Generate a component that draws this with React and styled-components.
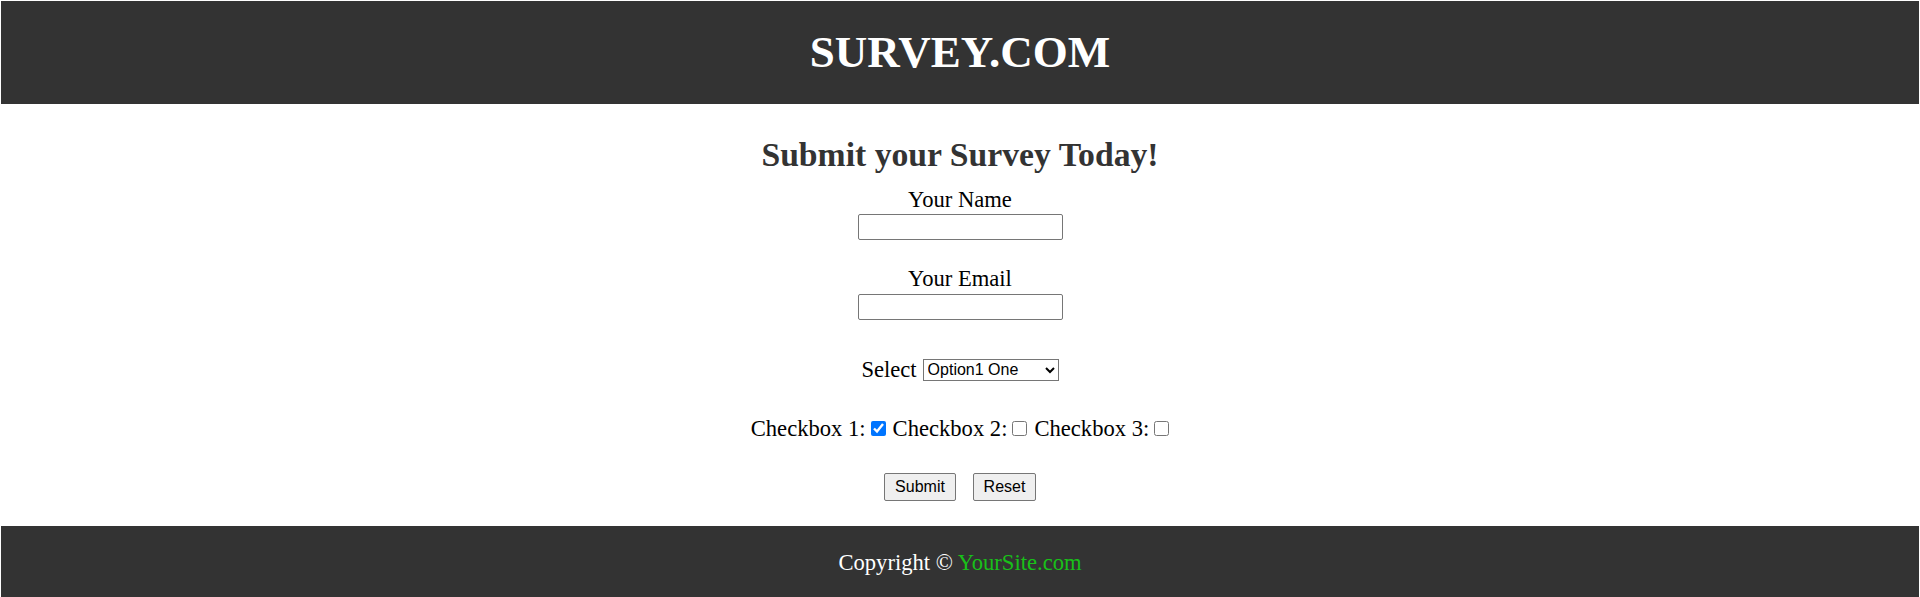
import styled, { createGlobalStyle } from "styled-components";

const GlobalStyle = createGlobalStyle`
  body {
    margin: 1px;
    background: #fff;
    font-family: "Liberation Serif", "Times New Roman", serif;
  }
`;

const Header = styled.header`
  height: 103px;
  background: #333;
  display: flex;
  align-items: center;
  justify-content: center;
`;

const Logo = styled.h1`
  margin: 0;
  color: #fff;
  font-size: 45px;
  font-weight: 700;
  line-height: 1;
`;

const Form = styled.form`
  display: flex;
  flex-direction: column;
  align-items: center;
  padding-top: 31px;
  padding-bottom: 25px;
`;

const Title = styled.h2`
  margin: 0 0 13px;
  color: #333;
  font-size: 33.7px;
  line-height: 39px;
  font-weight: 700;
`;

const Label = styled.label`
  display: block;
  font-size: 22.6px;
  line-height: 25px;
  color: #000;
  margin-top: ${({ $mt }) => $mt || "0"};
`;

const TextInput = styled.input`
  box-sizing: border-box;
  width: 205px;
  height: 26px;
  margin: ${({ $margin }) => $margin || "2px 0 0"};
  border: 1px solid #767676;
  border-radius: 2px;
  padding: 1px 3px;
  font-family: "Liberation Sans", Arial, sans-serif;
  font-size: 15px;
`;

const Row = styled.div`
  display: flex;
  align-items: center;
  height: 25px;
  font-size: 22.6px;
  line-height: 25px;
  margin-top: ${({ $mt }) => $mt || "0"};
`;

const Select = styled.select`
  box-sizing: border-box;
  width: 136px;
  height: 22px;
  margin-left: 6px;
  font-family: "Liberation Sans", Arial, sans-serif;
  font-size: 16px;
  border: 1px solid #767676;
  border-radius: 0;
  background: #fff;
  color: #000;
`;

const Check = styled.input`
  width: 15px;
  height: 15px;
  margin: 0 7px 0 5px;
  accent-color: #0075ff;

  &:last-child {
    margin-right: 0;
  }
`;

const Buttons = styled.div`
  display: flex;
  gap: 17px;
  margin-top: 32px;
`;

const Button = styled.button`
  box-sizing: border-box;
  height: 28px;
  width: ${({ $w }) => $w};
  padding: 0;
  font-family: "Liberation Sans", Arial, sans-serif;
  font-size: 16px;
  color: #000;
  background: #efefef;
  border: 1px solid #767676;
  border-radius: 2px;
`;

const Footer = styled.footer`
  background: #333;
  color: #fff;
  text-align: center;
  font-size: 22.6px;
  line-height: 25px;
  padding: 24px 0;
`;

const SiteLink = styled.span`
  color: #19c019;
`;

const App = () => {
  return (
    <>
      <GlobalStyle />
      <Header>
        <Logo>SURVEY.COM</Logo>
      </Header>

      <Form onSubmit={(e) => e.preventDefault()}>
        <Title>Submit your Survey Today!</Title>

        <Label htmlFor="name">Your Name</Label>
        <TextInput id="name" type="text" />

        <Label htmlFor="email" $mt="26px">
          Your Email
        </Label>
        <TextInput id="email" type="email" $margin="3px 0 0" />

        <Row $mt="37px">
          Select
          <Select defaultValue="1">
            <option value="1">Option1 One</option>
            <option value="2">Option2 Two</option>
            <option value="3">Option3 Three</option>
          </Select>
        </Row>

        <Row $mt="34px">
          Checkbox 1:
          <Check type="checkbox" defaultChecked />
          Checkbox 2:
          <Check type="checkbox" />
          Checkbox 3:
          <Check type="checkbox" />
        </Row>

        <Buttons>
          <Button type="submit" $w="72px">
            Submit
          </Button>
          <Button type="reset" $w="63px">
            Reset
          </Button>
        </Buttons>
      </Form>

      <Footer>
        Copyright © <SiteLink>YourSite.com</SiteLink>
      </Footer>
    </>
  );
};

export default App;
